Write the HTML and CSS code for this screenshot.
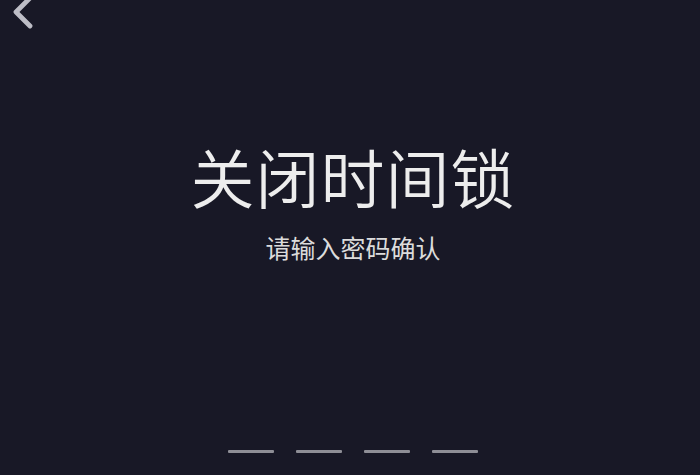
FILE: index.html
```html
<!DOCTYPE html>
<html lang="zh-CN">
<head>
<meta charset="utf-8">
<title>关闭时间锁</title>
<link rel="stylesheet" href="styles.css">
</head>
<body>
<div class="screen">
  <header class="topbar">
    <svg class="back" width="26" height="30" viewBox="0 0 26 30" aria-label="返回">
      <path d="M20 -2 L6 12 L20 26" fill="none" stroke="#bdbdc6" stroke-width="4.8" stroke-linecap="round" stroke-linejoin="round"/>
    </svg>
  </header>
  <main class="content">
    <h1 class="title">关闭时间锁</h1>
    <p class="subtitle">请输入密码确认</p>
    <div class="code">
      <span class="slot"></span>
      <span class="slot"></span>
      <span class="slot"></span>
      <span class="slot"></span>
    </div>
  </main>
</div>
</body>
</html>
```

FILE: styles.css
```css
html, body {
  margin: 0;
  padding: 0;
  background: #181826;
}
.screen {
  width: 700px;
  height: 475px;
  display: flex;
  flex-direction: column;
  background: #181826;
  font-family: "Noto Sans CJK SC", "Noto Sans", sans-serif;
  overflow: hidden;
}
.topbar {
  height: 30px;
  display: flex;
  align-items: flex-start;
  padding-left: 10px;
}
.back {
  display: block;
}
.content {
  flex: 1;
  display: flex;
  flex-direction: column;
  align-items: center;
  padding-left: 6px;
  padding-bottom: 22px;
}
.title {
  margin: 113px 0 0;
  font-size: 64px;
  line-height: 64px;
  font-weight: 350;
  color: #ededed;
  letter-spacing: 1px;
}
.subtitle {
  margin: 28px 0 0;
  font-size: 25px;
  line-height: 25px;
  font-weight: 400;
  color: #dcdcdc;
}
.code {
  margin-top: auto;
  display: flex;
  gap: 22px;
}
.slot {
  display: block;
  width: 46px;
  height: 3px;
  border-radius: 1px;
  background: #8e8e96;
}
```
